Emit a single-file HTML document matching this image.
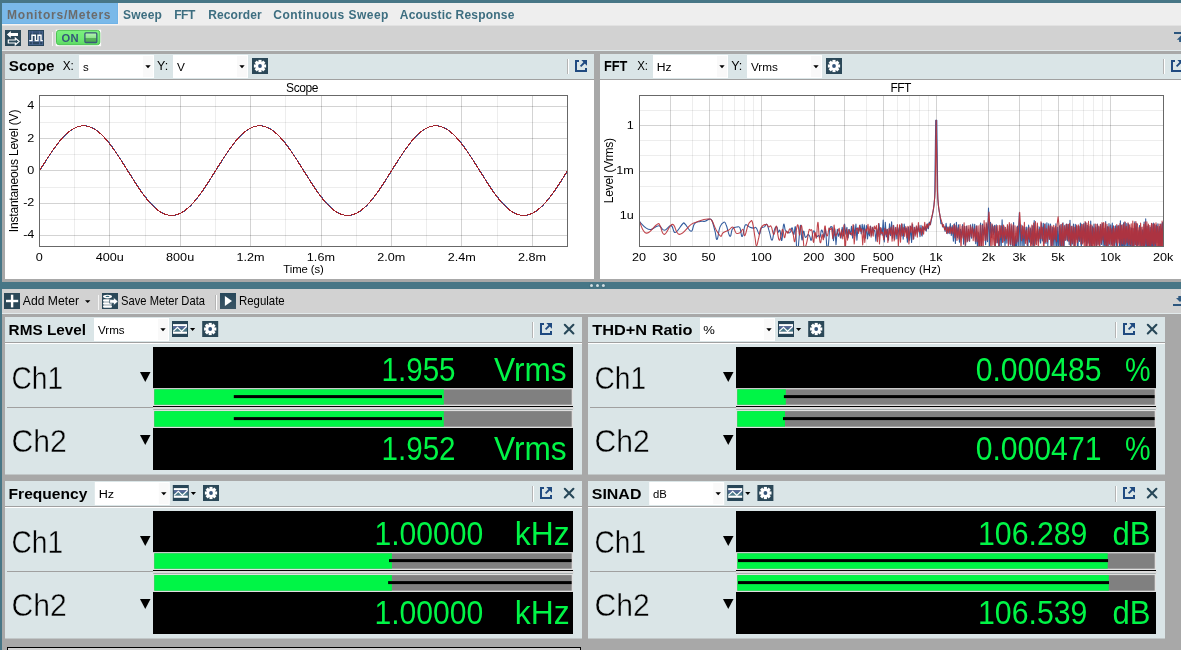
<!DOCTYPE html>
<html lang="en"><head><meta charset="utf-8"><title>APx500 Monitors/Meters</title>
<style>
html,body{margin:0;padding:0}
body{width:1181px;height:650px;overflow:hidden;background:#a8a8a8;position:relative;font-family:"Liberation Sans",sans-serif}
svg{position:absolute;display:block;will-change:transform;font-family:"Liberation Sans",sans-serif;overflow:hidden}
svg line,svg rect{shape-rendering:auto}
.frame-l{position:absolute;left:0;top:0;width:2px;height:650px;background:#477686}
.frame-t{position:absolute;left:0;top:0;width:1181px;height:3px;background:#477686}
.stub{position:absolute;left:7px;top:647px;width:572px;height:10px;border:1px solid #000;background:#d2d2d2}
</style></head>
<body>
<div class="frame-l"></div><div class="frame-t"></div>
<svg class="tabs" style="left:2px;top:3px" width="1179" height="23" viewBox="2 3 1179 23"><rect x="2" y="3" width="1179" height="23" fill="#eeeeee" /><rect x="2" y="3" width="116" height="21" fill="#7ab9e9" /><rect x="117" y="3" width="1" height="21" fill="#70b3e7" /><rect x="2" y="23" width="116" height="1" fill="#70b3e7" /><rect x="118" y="3" width="1" height="22" fill="#f6f3f1" /><rect x="2" y="24" width="117" height="1" fill="#f6f3f1" /><rect x="2" y="25" width="1179" height="1" fill="#e2e2e2" /><text x="7.03" y="18.7" font-size="12" font-weight="bold" letter-spacing="0.775" fill="#6b6b6b" >Monitors/Meters</text><text x="123.08" y="18.7" font-size="12" font-weight="bold" letter-spacing="0.189" fill="#3d6e80" >Sweep</text><text x="174.13" y="18.7" font-size="12" font-weight="bold" letter-spacing="-0.418" fill="#3d6e80" >FFT</text><text x="208.23" y="18.7" font-size="12" font-weight="bold" letter-spacing="0.124" fill="#3d6e80" >Recorder</text><text x="273.26" y="18.7" font-size="12" font-weight="bold" letter-spacing="0.475" fill="#3d6e80" >Continuous Sweep</text><text x="399.80" y="18.7" font-size="12" font-weight="bold" letter-spacing="0.199" fill="#3d6e80" >Acoustic Response</text></svg>
<svg class="toolbar" style="left:2px;top:26px" width="1179" height="25" viewBox="2 26 1179 25"><rect x="2" y="26" width="1179" height="24" fill="#d2d2d2" /><rect x="2" y="50" width="1179" height="1" fill="#e2eaec" /><rect x="5" y="30" width="16" height="16" fill="#2b4858" /><polygon points="6.9,34.5 10.8,30.9 10.8,33.1 18,33.1 18,35.9 10.8,35.9 10.8,38.1" fill="#fff"/><polygon points="19.1,41.5 15.3,38.0 15.3,40.0 8.3,40.0 8.3,43.0 15.3,43.0 15.3,45.0" fill="#2d4b5b" stroke="#fff" stroke-width="1.15" stroke-linejoin="miter"/><rect x="28" y="30" width="16" height="16" fill="#27445a" /><rect x="29" y="31" width="14" height="14" fill="#4a6490" /><rect x="29.8" y="33.2" width="2" height="11" fill="#2a4560" /><rect x="33" y="33.2" width="6" height="11" fill="#2a4560" /><rect x="40.2" y="33.2" width="2" height="11" fill="#2a4560" /><rect x="29.8" y="31.6" width="2" height="0.9" fill="#2a4560" /><rect x="33" y="31.6" width="6" height="0.9" fill="#2a4560" /><rect x="40.2" y="31.6" width="2" height="0.9" fill="#2a4560" /><rect x="29" y="41" width="14" height="0.8" fill="#4a6490" /><polyline points="29.2,40.6 32,40.6 32,35.3 35.3,35.3 35.3,40.6 38,40.6 38,35.3 41,35.3 41,40.6 42.8,40.6" fill="none" stroke="#fff" stroke-width="1.45"/><rect x="52" y="32" width="1" height="14" fill="#f4f4f4" /><defs><linearGradient id="gon" x1="0" y1="0" x2="0" y2="1"><stop offset="0" stop-color="#7cf080"/><stop offset=".6" stop-color="#6de972"/><stop offset="1" stop-color="#5cd962"/></linearGradient><linearGradient id="gsq" x1="0" y1="0" x2="0" y2="1"><stop offset="0" stop-color="#b6f5b4"/><stop offset=".48" stop-color="#8fe58f"/><stop offset=".52" stop-color="#57b55b"/><stop offset="1" stop-color="#4aa84f"/></linearGradient></defs><rect x="55.7" y="29.7" width="45.4" height="16.5" fill="#fbfbfb"/><rect x="56.5" y="30.4" width="43.3" height="14.3" rx="2.4" fill="url(#gon)" stroke="#4dc253" stroke-width="1"/><text x="61.49" y="41.8" font-size="11.2" font-weight="bold" letter-spacing="0.318" fill="#36587a" >ON</text><rect x="84.9" y="32.9" width="11.9" height="9.6" rx="1" fill="url(#gsq)" stroke="#3a5a78" stroke-width="1.3"/><rect x="1174" y="32" width="8" height="2" fill="#2c567e" /><polygon points="1181,35.6 1176.8,39.7 1179.1,39.7 1179.1,42.1 1183,42.1 1183,39.7 1185.2,39.7" fill="#2f5a82"/></svg>
<svg class="panel" style="left:5px;top:54px" width="589" height="225" viewBox="5 54 589 225"><rect x="5" y="54" width="589" height="225" fill="#fff" /><rect x="5" y="54" width="589" height="25" fill="#dae5e7" /><rect x="5" y="79" width="589" height="1" fill="#a0a0a0" /><text transform="translate(8.81 71.4) scale(1.0847 1)" font-size="14" font-weight="bold" fill="#000" >Scope</text><text transform="translate(62.70 70.2) scale(0.9223 1)" font-size="12.8" fill="#000" >X:</text><rect x="79" y="55" width="75" height="23" fill="#fff" /><rect x="143" y="56" width="10" height="21" fill="#f9f9f9" /><polygon points="145.3,65.3 150.70000000000002,65.3 148.0,68.3" fill="#000"/><text transform="translate(82.96 70.6) scale(0.9951 1)" font-size="11.5" fill="#000" >s</text><text transform="translate(157.10 70.2) scale(0.9729 1)" font-size="12.8" fill="#000" >Y:</text><rect x="173" y="55" width="75" height="23" fill="#fff" /><rect x="237" y="56" width="10" height="21" fill="#f9f9f9" /><polygon points="239.3,65.3 244.70000000000002,65.3 242.0,68.3" fill="#000"/><text transform="translate(176.94 70.6) scale(1.0291 1)" font-size="11.5" fill="#000" >V</text><rect x="252" y="58" width="16" height="16" fill="#2b4858" /><rect x="258.45" y="59.9" width="3.1" height="3" fill="#fff" transform="rotate(0 260 66)"/><rect x="258.45" y="59.9" width="3.1" height="3" fill="#fff" transform="rotate(45 260 66)"/><rect x="258.45" y="59.9" width="3.1" height="3" fill="#fff" transform="rotate(90 260 66)"/><rect x="258.45" y="59.9" width="3.1" height="3" fill="#fff" transform="rotate(135 260 66)"/><rect x="258.45" y="59.9" width="3.1" height="3" fill="#fff" transform="rotate(180 260 66)"/><rect x="258.45" y="59.9" width="3.1" height="3" fill="#fff" transform="rotate(225 260 66)"/><rect x="258.45" y="59.9" width="3.1" height="3" fill="#fff" transform="rotate(270 260 66)"/><rect x="258.45" y="59.9" width="3.1" height="3" fill="#fff" transform="rotate(315 260 66)"/><circle cx="260" cy="66" r="4.4" fill="#fff"/><circle cx="260" cy="66" r="1.9" fill="#34547a"/><rect x="567" y="59" width="1" height="15" fill="#b4b4b4"/><rect x="568" y="59" width="1" height="15" fill="#fff"/><path d="M579,61H576V71H586V68" fill="none" stroke="#1f4a80" stroke-width="2"/><polygon points="581.3,60 587,60 587,65.7" fill="#1f4a80"/><line x1="580.6" y1="66.4" x2="585" y2="62" stroke="#1f4a80" stroke-width="1.8"/><line x1="74.5" y1="95.5" x2="74.5" y2="246.5" stroke="#000" stroke-opacity=".07"/><line x1="109.5" y1="95.5" x2="109.5" y2="246.5" stroke="#000" stroke-opacity=".172"/><line x1="145.5" y1="95.5" x2="145.5" y2="246.5" stroke="#000" stroke-opacity=".07"/><line x1="180.5" y1="95.5" x2="180.5" y2="246.5" stroke="#000" stroke-opacity=".172"/><line x1="215.5" y1="95.5" x2="215.5" y2="246.5" stroke="#000" stroke-opacity=".07"/><line x1="250.5" y1="95.5" x2="250.5" y2="246.5" stroke="#000" stroke-opacity=".172"/><line x1="285.5" y1="95.5" x2="285.5" y2="246.5" stroke="#000" stroke-opacity=".07"/><line x1="321.5" y1="95.5" x2="321.5" y2="246.5" stroke="#000" stroke-opacity=".172"/><line x1="356.5" y1="95.5" x2="356.5" y2="246.5" stroke="#000" stroke-opacity=".07"/><line x1="391.5" y1="95.5" x2="391.5" y2="246.5" stroke="#000" stroke-opacity=".172"/><line x1="426.5" y1="95.5" x2="426.5" y2="246.5" stroke="#000" stroke-opacity=".07"/><line x1="461.5" y1="95.5" x2="461.5" y2="246.5" stroke="#000" stroke-opacity=".172"/><line x1="497.5" y1="95.5" x2="497.5" y2="246.5" stroke="#000" stroke-opacity=".07"/><line x1="532.5" y1="95.5" x2="532.5" y2="246.5" stroke="#000" stroke-opacity=".172"/><line x1="39.5" y1="235.5" x2="567.5" y2="235.5" stroke="#000" stroke-opacity=".172"/><line x1="39.5" y1="219.5" x2="567.5" y2="219.5" stroke="#000" stroke-opacity=".07"/><line x1="39.5" y1="203.5" x2="567.5" y2="203.5" stroke="#000" stroke-opacity=".172"/><line x1="39.5" y1="187.5" x2="567.5" y2="187.5" stroke="#000" stroke-opacity=".07"/><line x1="39.5" y1="170.5" x2="567.5" y2="170.5" stroke="#000" stroke-opacity=".172"/><line x1="39.5" y1="154.5" x2="567.5" y2="154.5" stroke="#000" stroke-opacity=".07"/><line x1="39.5" y1="138.5" x2="567.5" y2="138.5" stroke="#000" stroke-opacity=".172"/><line x1="39.5" y1="122.5" x2="567.5" y2="122.5" stroke="#000" stroke-opacity=".07"/><line x1="39.5" y1="106.5" x2="567.5" y2="106.5" stroke="#000" stroke-opacity=".172"/><polyline points="39.50,171.16 40.38,169.76 41.26,168.35 42.14,166.94 43.02,165.54 43.90,164.15 44.78,162.76 45.66,161.38 46.54,160.00 47.42,158.64 48.30,157.29 49.18,155.96 50.06,154.63 50.94,153.33 51.82,152.04 52.70,150.76 53.58,149.51 54.46,148.28 55.34,147.07 56.22,145.89 57.10,144.72 57.98,143.59 58.86,142.48 59.74,141.40 60.62,140.35 61.50,139.32 62.38,138.33 63.26,137.37 64.14,136.44 65.02,135.55 65.90,134.69 66.78,133.87 67.66,133.08 68.54,132.33 69.42,131.62 70.30,130.94 71.18,130.31 72.06,129.71 72.94,129.16 73.82,128.64 74.70,128.17 75.58,127.74 76.46,127.35 77.34,127.01 78.22,126.70 79.10,126.44 79.98,126.23 80.86,126.06 81.74,125.93 82.62,125.84 83.50,125.80 84.38,125.81 85.26,125.86 86.14,125.95 87.02,126.09 87.90,126.27 88.78,126.49 89.66,126.76 90.54,127.07 91.42,127.43 92.30,127.82 93.18,128.26 94.06,128.74 94.94,129.26 95.82,129.83 96.70,130.43 97.58,131.07 98.46,131.76 99.34,132.48 100.22,133.23 101.10,134.03 101.98,134.86 102.86,135.72 103.74,136.63 104.62,137.56 105.50,138.53 106.38,139.52 107.26,140.55 108.14,141.61 109.02,142.70 109.90,143.81 110.78,144.96 111.66,146.12 112.54,147.31 113.42,148.53 114.30,149.76 115.18,151.02 116.06,152.29 116.94,153.59 117.82,154.90 118.70,156.22 119.58,157.56 120.46,158.91 121.34,160.28 122.22,161.65 123.10,163.04 123.98,164.43 124.86,165.82 125.74,167.23 126.62,168.63 127.50,170.04 128.38,171.44 129.26,172.85 130.14,174.26 131.02,175.66 131.90,177.05 132.78,178.44 133.66,179.82 134.54,181.20 135.42,182.56 136.30,183.91 137.18,185.24 138.06,186.57 138.94,187.87 139.82,189.16 140.70,190.44 141.58,191.69 142.46,192.92 143.34,194.13 144.22,195.31 145.10,196.48 145.98,197.61 146.86,198.72 147.74,199.80 148.62,200.85 149.50,201.88 150.38,202.87 151.26,203.83 152.14,204.76 153.02,205.65 153.90,206.51 154.78,207.33 155.66,208.12 156.54,208.87 157.42,209.58 158.30,210.26 159.18,210.89 160.06,211.49 160.94,212.04 161.82,212.56 162.70,213.03 163.58,213.46 164.46,213.85 165.34,214.19 166.22,214.50 167.10,214.76 167.98,214.97 168.86,215.14 169.74,215.27 170.62,215.36 171.50,215.40 172.38,215.39 173.26,215.34 174.14,215.25 175.02,215.11 175.90,214.93 176.78,214.71 177.66,214.44 178.54,214.13 179.42,213.77 180.30,213.38 181.18,212.94 182.06,212.46 182.94,211.94 183.82,211.37 184.70,210.77 185.58,210.13 186.46,209.44 187.34,208.72 188.22,207.97 189.10,207.17 189.98,206.34 190.86,205.48 191.74,204.57 192.62,203.64 193.50,202.67 194.38,201.68 195.26,200.65 196.14,199.59 197.02,198.50 197.90,197.39 198.78,196.24 199.66,195.08 200.54,193.89 201.42,192.67 202.30,191.44 203.18,190.18 204.06,188.91 204.94,187.61 205.82,186.30 206.70,184.98 207.58,183.64 208.46,182.29 209.34,180.92 210.22,179.55 211.10,178.16 211.98,176.77 212.86,175.38 213.74,173.97 214.62,172.57 215.50,171.16 216.38,169.76 217.26,168.35 218.14,166.94 219.02,165.54 219.90,164.15 220.78,162.76 221.66,161.38 222.54,160.00 223.42,158.64 224.30,157.29 225.18,155.96 226.06,154.63 226.94,153.33 227.82,152.04 228.70,150.76 229.58,149.51 230.46,148.28 231.34,147.07 232.22,145.89 233.10,144.72 233.98,143.59 234.86,142.48 235.74,141.40 236.62,140.35 237.50,139.32 238.38,138.33 239.26,137.37 240.14,136.44 241.02,135.55 241.90,134.69 242.78,133.87 243.66,133.08 244.54,132.33 245.42,131.62 246.30,130.94 247.18,130.31 248.06,129.71 248.94,129.16 249.82,128.64 250.70,128.17 251.58,127.74 252.46,127.35 253.34,127.01 254.22,126.70 255.10,126.44 255.98,126.23 256.86,126.06 257.74,125.93 258.62,125.84 259.50,125.80 260.38,125.81 261.26,125.86 262.14,125.95 263.02,126.09 263.90,126.27 264.78,126.49 265.66,126.76 266.54,127.07 267.42,127.43 268.30,127.82 269.18,128.26 270.06,128.74 270.94,129.26 271.82,129.83 272.70,130.43 273.58,131.07 274.46,131.76 275.34,132.48 276.22,133.23 277.10,134.03 277.98,134.86 278.86,135.72 279.74,136.63 280.62,137.56 281.50,138.53 282.38,139.52 283.26,140.55 284.14,141.61 285.02,142.70 285.90,143.81 286.78,144.96 287.66,146.12 288.54,147.31 289.42,148.53 290.30,149.76 291.18,151.02 292.06,152.29 292.94,153.59 293.82,154.90 294.70,156.22 295.58,157.56 296.46,158.91 297.34,160.28 298.22,161.65 299.10,163.04 299.98,164.43 300.86,165.82 301.74,167.23 302.62,168.63 303.50,170.04 304.38,171.44 305.26,172.85 306.14,174.26 307.02,175.66 307.90,177.05 308.78,178.44 309.66,179.82 310.54,181.20 311.42,182.56 312.30,183.91 313.18,185.24 314.06,186.57 314.94,187.87 315.82,189.16 316.70,190.44 317.58,191.69 318.46,192.92 319.34,194.13 320.22,195.31 321.10,196.48 321.98,197.61 322.86,198.72 323.74,199.80 324.62,200.85 325.50,201.88 326.38,202.87 327.26,203.83 328.14,204.76 329.02,205.65 329.90,206.51 330.78,207.33 331.66,208.12 332.54,208.87 333.42,209.58 334.30,210.26 335.18,210.89 336.06,211.49 336.94,212.04 337.82,212.56 338.70,213.03 339.58,213.46 340.46,213.85 341.34,214.19 342.22,214.50 343.10,214.76 343.98,214.97 344.86,215.14 345.74,215.27 346.62,215.36 347.50,215.40 348.38,215.39 349.26,215.34 350.14,215.25 351.02,215.11 351.90,214.93 352.78,214.71 353.66,214.44 354.54,214.13 355.42,213.77 356.30,213.38 357.18,212.94 358.06,212.46 358.94,211.94 359.82,211.37 360.70,210.77 361.58,210.13 362.46,209.44 363.34,208.72 364.22,207.97 365.10,207.17 365.98,206.34 366.86,205.48 367.74,204.57 368.62,203.64 369.50,202.67 370.38,201.68 371.26,200.65 372.14,199.59 373.02,198.50 373.90,197.39 374.78,196.24 375.66,195.08 376.54,193.89 377.42,192.67 378.30,191.44 379.18,190.18 380.06,188.91 380.94,187.61 381.82,186.30 382.70,184.98 383.58,183.64 384.46,182.29 385.34,180.92 386.22,179.55 387.10,178.16 387.98,176.77 388.86,175.38 389.74,173.97 390.62,172.57 391.50,171.16 392.38,169.76 393.26,168.35 394.14,166.94 395.02,165.54 395.90,164.15 396.78,162.76 397.66,161.38 398.54,160.00 399.42,158.64 400.30,157.29 401.18,155.96 402.06,154.63 402.94,153.33 403.82,152.04 404.70,150.76 405.58,149.51 406.46,148.28 407.34,147.07 408.22,145.89 409.10,144.72 409.98,143.59 410.86,142.48 411.74,141.40 412.62,140.35 413.50,139.32 414.38,138.33 415.26,137.37 416.14,136.44 417.02,135.55 417.90,134.69 418.78,133.87 419.66,133.08 420.54,132.33 421.42,131.62 422.30,130.94 423.18,130.31 424.06,129.71 424.94,129.16 425.82,128.64 426.70,128.17 427.58,127.74 428.46,127.35 429.34,127.01 430.22,126.70 431.10,126.44 431.98,126.23 432.86,126.06 433.74,125.93 434.62,125.84 435.50,125.80 436.38,125.81 437.26,125.86 438.14,125.95 439.02,126.09 439.90,126.27 440.78,126.49 441.66,126.76 442.54,127.07 443.42,127.43 444.30,127.82 445.18,128.26 446.06,128.74 446.94,129.26 447.82,129.83 448.70,130.43 449.58,131.07 450.46,131.76 451.34,132.48 452.22,133.23 453.10,134.03 453.98,134.86 454.86,135.72 455.74,136.63 456.62,137.56 457.50,138.53 458.38,139.52 459.26,140.55 460.14,141.61 461.02,142.70 461.90,143.81 462.78,144.96 463.66,146.12 464.54,147.31 465.42,148.53 466.30,149.76 467.18,151.02 468.06,152.29 468.94,153.59 469.82,154.90 470.70,156.22 471.58,157.56 472.46,158.91 473.34,160.28 474.22,161.65 475.10,163.04 475.98,164.43 476.86,165.82 477.74,167.23 478.62,168.63 479.50,170.04 480.38,171.44 481.26,172.85 482.14,174.26 483.02,175.66 483.90,177.05 484.78,178.44 485.66,179.82 486.54,181.20 487.42,182.56 488.30,183.91 489.18,185.24 490.06,186.57 490.94,187.87 491.82,189.16 492.70,190.44 493.58,191.69 494.46,192.92 495.34,194.13 496.22,195.31 497.10,196.48 497.98,197.61 498.86,198.72 499.74,199.80 500.62,200.85 501.50,201.88 502.38,202.87 503.26,203.83 504.14,204.76 505.02,205.65 505.90,206.51 506.78,207.33 507.66,208.12 508.54,208.87 509.42,209.58 510.30,210.26 511.18,210.89 512.06,211.49 512.94,212.04 513.82,212.56 514.70,213.03 515.58,213.46 516.46,213.85 517.34,214.19 518.22,214.50 519.10,214.76 519.98,214.97 520.86,215.14 521.74,215.27 522.62,215.36 523.50,215.40 524.38,215.39 525.26,215.34 526.14,215.25 527.02,215.11 527.90,214.93 528.78,214.71 529.66,214.44 530.54,214.13 531.42,213.77 532.30,213.38 533.18,212.94 534.06,212.46 534.94,211.94 535.82,211.37 536.70,210.77 537.58,210.13 538.46,209.44 539.34,208.72 540.22,207.97 541.10,207.17 541.98,206.34 542.86,205.48 543.74,204.57 544.62,203.64 545.50,202.67 546.38,201.68 547.26,200.65 548.14,199.59 549.02,198.50 549.90,197.39 550.78,196.24 551.66,195.08 552.54,193.89 553.42,192.67 554.30,191.44 555.18,190.18 556.06,188.91 556.94,187.61 557.82,186.30 558.70,184.98 559.58,183.64 560.46,182.29 561.34,180.92 562.22,179.55 563.10,178.16 563.98,176.77 564.86,175.38 565.74,173.97 566.62,172.57 567.50,171.16" fill="none" stroke="#3a5aa0" stroke-width="1" shape-rendering="crispEdges"/><polyline points="39.50,170.60 40.38,169.19 41.26,167.79 42.14,166.38 43.02,164.99 43.90,163.59 44.78,162.21 45.66,160.83 46.54,159.46 47.42,158.10 48.30,156.76 49.18,155.42 50.06,154.11 50.94,152.81 51.82,151.53 52.70,150.26 53.58,149.02 54.46,147.79 55.34,146.59 56.22,145.42 57.10,144.27 57.98,143.14 58.86,142.04 59.74,140.97 60.62,139.93 61.50,138.92 62.38,137.94 63.26,137.00 64.14,136.08 65.02,135.20 65.90,134.36 66.78,133.55 67.66,132.77 68.54,132.04 69.42,131.34 70.30,130.68 71.18,130.06 72.06,129.48 72.94,128.95 73.82,128.45 74.70,127.99 75.58,127.58 76.46,127.21 77.34,126.88 78.22,126.59 79.10,126.35 79.98,126.15 80.86,126.00 81.74,125.89 82.62,125.82 83.50,125.80 84.38,125.82 85.26,125.89 86.14,126.00 87.02,126.15 87.90,126.35 88.78,126.59 89.66,126.88 90.54,127.21 91.42,127.58 92.30,127.99 93.18,128.45 94.06,128.95 94.94,129.48 95.82,130.06 96.70,130.68 97.58,131.34 98.46,132.04 99.34,132.77 100.22,133.55 101.10,134.36 101.98,135.20 102.86,136.08 103.74,137.00 104.62,137.94 105.50,138.92 106.38,139.93 107.26,140.97 108.14,142.04 109.02,143.14 109.90,144.27 110.78,145.42 111.66,146.59 112.54,147.79 113.42,149.02 114.30,150.26 115.18,151.53 116.06,152.81 116.94,154.11 117.82,155.42 118.70,156.76 119.58,158.10 120.46,159.46 121.34,160.83 122.22,162.21 123.10,163.59 123.98,164.99 124.86,166.38 125.74,167.79 126.62,169.19 127.50,170.60 128.38,172.01 129.26,173.41 130.14,174.82 131.02,176.21 131.90,177.61 132.78,178.99 133.66,180.37 134.54,181.74 135.42,183.10 136.30,184.44 137.18,185.78 138.06,187.09 138.94,188.39 139.82,189.67 140.70,190.94 141.58,192.18 142.46,193.41 143.34,194.61 144.22,195.78 145.10,196.93 145.98,198.06 146.86,199.16 147.74,200.23 148.62,201.27 149.50,202.28 150.38,203.26 151.26,204.20 152.14,205.12 153.02,206.00 153.90,206.84 154.78,207.65 155.66,208.43 156.54,209.16 157.42,209.86 158.30,210.52 159.18,211.14 160.06,211.72 160.94,212.25 161.82,212.75 162.70,213.21 163.58,213.62 164.46,213.99 165.34,214.32 166.22,214.61 167.10,214.85 167.98,215.05 168.86,215.20 169.74,215.31 170.62,215.38 171.50,215.40 172.38,215.38 173.26,215.31 174.14,215.20 175.02,215.05 175.90,214.85 176.78,214.61 177.66,214.32 178.54,213.99 179.42,213.62 180.30,213.21 181.18,212.75 182.06,212.25 182.94,211.72 183.82,211.14 184.70,210.52 185.58,209.86 186.46,209.16 187.34,208.43 188.22,207.65 189.10,206.84 189.98,206.00 190.86,205.12 191.74,204.20 192.62,203.26 193.50,202.28 194.38,201.27 195.26,200.23 196.14,199.16 197.02,198.06 197.90,196.93 198.78,195.78 199.66,194.61 200.54,193.41 201.42,192.18 202.30,190.94 203.18,189.67 204.06,188.39 204.94,187.09 205.82,185.78 206.70,184.44 207.58,183.10 208.46,181.74 209.34,180.37 210.22,178.99 211.10,177.61 211.98,176.21 212.86,174.82 213.74,173.41 214.62,172.01 215.50,170.60 216.38,169.19 217.26,167.79 218.14,166.38 219.02,164.99 219.90,163.59 220.78,162.21 221.66,160.83 222.54,159.46 223.42,158.10 224.30,156.76 225.18,155.42 226.06,154.11 226.94,152.81 227.82,151.53 228.70,150.26 229.58,149.02 230.46,147.79 231.34,146.59 232.22,145.42 233.10,144.27 233.98,143.14 234.86,142.04 235.74,140.97 236.62,139.93 237.50,138.92 238.38,137.94 239.26,137.00 240.14,136.08 241.02,135.20 241.90,134.36 242.78,133.55 243.66,132.77 244.54,132.04 245.42,131.34 246.30,130.68 247.18,130.06 248.06,129.48 248.94,128.95 249.82,128.45 250.70,127.99 251.58,127.58 252.46,127.21 253.34,126.88 254.22,126.59 255.10,126.35 255.98,126.15 256.86,126.00 257.74,125.89 258.62,125.82 259.50,125.80 260.38,125.82 261.26,125.89 262.14,126.00 263.02,126.15 263.90,126.35 264.78,126.59 265.66,126.88 266.54,127.21 267.42,127.58 268.30,127.99 269.18,128.45 270.06,128.95 270.94,129.48 271.82,130.06 272.70,130.68 273.58,131.34 274.46,132.04 275.34,132.77 276.22,133.55 277.10,134.36 277.98,135.20 278.86,136.08 279.74,137.00 280.62,137.94 281.50,138.92 282.38,139.93 283.26,140.97 284.14,142.04 285.02,143.14 285.90,144.27 286.78,145.42 287.66,146.59 288.54,147.79 289.42,149.02 290.30,150.26 291.18,151.53 292.06,152.81 292.94,154.11 293.82,155.42 294.70,156.76 295.58,158.10 296.46,159.46 297.34,160.83 298.22,162.21 299.10,163.59 299.98,164.99 300.86,166.38 301.74,167.79 302.62,169.19 303.50,170.60 304.38,172.01 305.26,173.41 306.14,174.82 307.02,176.21 307.90,177.61 308.78,178.99 309.66,180.37 310.54,181.74 311.42,183.10 312.30,184.44 313.18,185.78 314.06,187.09 314.94,188.39 315.82,189.67 316.70,190.94 317.58,192.18 318.46,193.41 319.34,194.61 320.22,195.78 321.10,196.93 321.98,198.06 322.86,199.16 323.74,200.23 324.62,201.27 325.50,202.28 326.38,203.26 327.26,204.20 328.14,205.12 329.02,206.00 329.90,206.84 330.78,207.65 331.66,208.43 332.54,209.16 333.42,209.86 334.30,210.52 335.18,211.14 336.06,211.72 336.94,212.25 337.82,212.75 338.70,213.21 339.58,213.62 340.46,213.99 341.34,214.32 342.22,214.61 343.10,214.85 343.98,215.05 344.86,215.20 345.74,215.31 346.62,215.38 347.50,215.40 348.38,215.38 349.26,215.31 350.14,215.20 351.02,215.05 351.90,214.85 352.78,214.61 353.66,214.32 354.54,213.99 355.42,213.62 356.30,213.21 357.18,212.75 358.06,212.25 358.94,211.72 359.82,211.14 360.70,210.52 361.58,209.86 362.46,209.16 363.34,208.43 364.22,207.65 365.10,206.84 365.98,206.00 366.86,205.12 367.74,204.20 368.62,203.26 369.50,202.28 370.38,201.27 371.26,200.23 372.14,199.16 373.02,198.06 373.90,196.93 374.78,195.78 375.66,194.61 376.54,193.41 377.42,192.18 378.30,190.94 379.18,189.67 380.06,188.39 380.94,187.09 381.82,185.78 382.70,184.44 383.58,183.10 384.46,181.74 385.34,180.37 386.22,178.99 387.10,177.61 387.98,176.21 388.86,174.82 389.74,173.41 390.62,172.01 391.50,170.60 392.38,169.19 393.26,167.79 394.14,166.38 395.02,164.99 395.90,163.59 396.78,162.21 397.66,160.83 398.54,159.46 399.42,158.10 400.30,156.76 401.18,155.42 402.06,154.11 402.94,152.81 403.82,151.53 404.70,150.26 405.58,149.02 406.46,147.79 407.34,146.59 408.22,145.42 409.10,144.27 409.98,143.14 410.86,142.04 411.74,140.97 412.62,139.93 413.50,138.92 414.38,137.94 415.26,137.00 416.14,136.08 417.02,135.20 417.90,134.36 418.78,133.55 419.66,132.77 420.54,132.04 421.42,131.34 422.30,130.68 423.18,130.06 424.06,129.48 424.94,128.95 425.82,128.45 426.70,127.99 427.58,127.58 428.46,127.21 429.34,126.88 430.22,126.59 431.10,126.35 431.98,126.15 432.86,126.00 433.74,125.89 434.62,125.82 435.50,125.80 436.38,125.82 437.26,125.89 438.14,126.00 439.02,126.15 439.90,126.35 440.78,126.59 441.66,126.88 442.54,127.21 443.42,127.58 444.30,127.99 445.18,128.45 446.06,128.95 446.94,129.48 447.82,130.06 448.70,130.68 449.58,131.34 450.46,132.04 451.34,132.77 452.22,133.55 453.10,134.36 453.98,135.20 454.86,136.08 455.74,137.00 456.62,137.94 457.50,138.92 458.38,139.93 459.26,140.97 460.14,142.04 461.02,143.14 461.90,144.27 462.78,145.42 463.66,146.59 464.54,147.79 465.42,149.02 466.30,150.26 467.18,151.53 468.06,152.81 468.94,154.11 469.82,155.42 470.70,156.76 471.58,158.10 472.46,159.46 473.34,160.83 474.22,162.21 475.10,163.59 475.98,164.99 476.86,166.38 477.74,167.79 478.62,169.19 479.50,170.60 480.38,172.01 481.26,173.41 482.14,174.82 483.02,176.21 483.90,177.61 484.78,178.99 485.66,180.37 486.54,181.74 487.42,183.10 488.30,184.44 489.18,185.78 490.06,187.09 490.94,188.39 491.82,189.67 492.70,190.94 493.58,192.18 494.46,193.41 495.34,194.61 496.22,195.78 497.10,196.93 497.98,198.06 498.86,199.16 499.74,200.23 500.62,201.27 501.50,202.28 502.38,203.26 503.26,204.20 504.14,205.12 505.02,206.00 505.90,206.84 506.78,207.65 507.66,208.43 508.54,209.16 509.42,209.86 510.30,210.52 511.18,211.14 512.06,211.72 512.94,212.25 513.82,212.75 514.70,213.21 515.58,213.62 516.46,213.99 517.34,214.32 518.22,214.61 519.10,214.85 519.98,215.05 520.86,215.20 521.74,215.31 522.62,215.38 523.50,215.40 524.38,215.38 525.26,215.31 526.14,215.20 527.02,215.05 527.90,214.85 528.78,214.61 529.66,214.32 530.54,213.99 531.42,213.62 532.30,213.21 533.18,212.75 534.06,212.25 534.94,211.72 535.82,211.14 536.70,210.52 537.58,209.86 538.46,209.16 539.34,208.43 540.22,207.65 541.10,206.84 541.98,206.00 542.86,205.12 543.74,204.20 544.62,203.26 545.50,202.28 546.38,201.27 547.26,200.23 548.14,199.16 549.02,198.06 549.90,196.93 550.78,195.78 551.66,194.61 552.54,193.41 553.42,192.18 554.30,190.94 555.18,189.67 556.06,188.39 556.94,187.09 557.82,185.78 558.70,184.44 559.58,183.10 560.46,181.74 561.34,180.37 562.22,178.99 563.10,177.61 563.98,176.21 564.86,174.82 565.74,173.41 566.62,172.01 567.50,170.60" fill="none" stroke="#a2242e" stroke-width="1" shape-rendering="crispEdges"/><rect x="39.5" y="95.5" width="528.0" height="151.0" fill="none" stroke="#686868"/><text x="286.10" y="91.7" font-size="12" letter-spacing="-0.452" fill="#000" >Scope</text><text transform="translate(34.4 109.4) scale(1.12 1)" font-size="11.3" text-anchor="end" fill="#000">4</text><text transform="translate(34.4 141.6) scale(1.12 1)" font-size="11.3" text-anchor="end" fill="#000">2</text><text transform="translate(34.4 173.8) scale(1.12 1)" font-size="11.3" text-anchor="end" fill="#000">0</text><text transform="translate(34.4 206.00000000000003) scale(1.12 1)" font-size="11.3" text-anchor="end" fill="#000">-2</text><text transform="translate(34.4 238.20000000000002) scale(1.12 1)" font-size="11.3" text-anchor="end" fill="#000">-4</text><text transform="translate(39.3 260.5) scale(1.12 1)" font-size="11.3" text-anchor="middle" fill="#000">0</text><text transform="translate(109.7 260.5) scale(1.12 1)" font-size="11.3" text-anchor="middle" fill="#000">400u</text><text transform="translate(180.10000000000002 260.5) scale(1.12 1)" font-size="11.3" text-anchor="middle" fill="#000">800u</text><text transform="translate(250.5 260.5) scale(1.12 1)" font-size="11.3" text-anchor="middle" fill="#000">1.2m</text><text transform="translate(320.90000000000003 260.5) scale(1.12 1)" font-size="11.3" text-anchor="middle" fill="#000">1.6m</text><text transform="translate(391.3 260.5) scale(1.12 1)" font-size="11.3" text-anchor="middle" fill="#000">2.0m</text><text transform="translate(461.7 260.5) scale(1.12 1)" font-size="11.3" text-anchor="middle" fill="#000">2.4m</text><text transform="translate(532.0999999999999 260.5) scale(1.12 1)" font-size="11.3" text-anchor="middle" fill="#000">2.8m</text><text x="283.31" y="272.6" font-size="11.3" letter-spacing="-0.072" fill="#000" >Time (s)</text><text transform="translate(18.4,170.9) rotate(-90)" font-size="12" text-anchor="middle" textLength="122.6" lengthAdjust="spacing">Instantaneous Level (V)</text></svg>
<svg class="panel" style="left:600px;top:54px" width="581" height="225" viewBox="600 54 581 225"><rect x="600" y="54" width="581" height="225" fill="#fff" /><rect x="600" y="54" width="581" height="25" fill="#dae5e7" /><rect x="600" y="79" width="581" height="1" fill="#a0a0a0" /><text transform="translate(603.99 71.4) scale(0.9140 1)" font-size="14" font-weight="bold" fill="#000" >FFT</text><text transform="translate(637.20 70.2) scale(0.8982 1)" font-size="12.8" fill="#000" >X:</text><rect x="653" y="55" width="75" height="23" fill="#fff" /><rect x="717" y="56" width="10" height="21" fill="#f9f9f9" /><polygon points="719.3,65.3 724.6999999999999,65.3 722.0,68.3" fill="#000"/><text transform="translate(656.81 70.6) scale(1.0571 1)" font-size="11.5" fill="#000" >Hz</text><text transform="translate(731.18 70.2) scale(0.9779 1)" font-size="12.8" fill="#000" >Y:</text><rect x="747" y="55" width="75" height="23" fill="#fff" /><rect x="811" y="56" width="10" height="21" fill="#f9f9f9" /><polygon points="813.3,65.3 818.6999999999999,65.3 816.0,68.3" fill="#000"/><text transform="translate(750.94 70.6) scale(1.0227 1)" font-size="11.5" fill="#000" >Vrms</text><rect x="826" y="58" width="16" height="16" fill="#2b4858" /><rect x="832.45" y="59.9" width="3.1" height="3" fill="#fff" transform="rotate(0 834 66)"/><rect x="832.45" y="59.9" width="3.1" height="3" fill="#fff" transform="rotate(45 834 66)"/><rect x="832.45" y="59.9" width="3.1" height="3" fill="#fff" transform="rotate(90 834 66)"/><rect x="832.45" y="59.9" width="3.1" height="3" fill="#fff" transform="rotate(135 834 66)"/><rect x="832.45" y="59.9" width="3.1" height="3" fill="#fff" transform="rotate(180 834 66)"/><rect x="832.45" y="59.9" width="3.1" height="3" fill="#fff" transform="rotate(225 834 66)"/><rect x="832.45" y="59.9" width="3.1" height="3" fill="#fff" transform="rotate(270 834 66)"/><rect x="832.45" y="59.9" width="3.1" height="3" fill="#fff" transform="rotate(315 834 66)"/><circle cx="834" cy="66" r="4.4" fill="#fff"/><circle cx="834" cy="66" r="1.9" fill="#34547a"/><rect x="1163" y="59" width="1" height="15" fill="#b4b4b4"/><rect x="1164" y="59" width="1" height="15" fill="#fff"/><path d="M1175,61H1172V71H1182V68" fill="none" stroke="#1f4a80" stroke-width="2"/><polygon points="1177.3,60 1183,60 1183,65.7" fill="#1f4a80"/><line x1="1176.6" y1="66.4" x2="1181" y2="62" stroke="#1f4a80" stroke-width="1.8"/><line x1="670.5" y1="95.5" x2="670.5" y2="246.5" stroke="#000" stroke-opacity=".172"/><line x1="692.5" y1="95.5" x2="692.5" y2="246.5" stroke="#000" stroke-opacity=".07"/><line x1="709.5" y1="95.5" x2="709.5" y2="246.5" stroke="#000" stroke-opacity=".172"/><line x1="722.5" y1="95.5" x2="722.5" y2="246.5" stroke="#000" stroke-opacity=".07"/><line x1="734.5" y1="95.5" x2="734.5" y2="246.5" stroke="#000" stroke-opacity=".07"/><line x1="744.5" y1="95.5" x2="744.5" y2="246.5" stroke="#000" stroke-opacity=".07"/><line x1="753.5" y1="95.5" x2="753.5" y2="246.5" stroke="#000" stroke-opacity=".07"/><line x1="761.5" y1="95.5" x2="761.5" y2="246.5" stroke="#000" stroke-opacity=".172"/><line x1="814.5" y1="95.5" x2="814.5" y2="246.5" stroke="#000" stroke-opacity=".172"/><line x1="844.5" y1="95.5" x2="844.5" y2="246.5" stroke="#000" stroke-opacity=".172"/><line x1="866.5" y1="95.5" x2="866.5" y2="246.5" stroke="#000" stroke-opacity=".07"/><line x1="883.5" y1="95.5" x2="883.5" y2="246.5" stroke="#000" stroke-opacity=".172"/><line x1="897.5" y1="95.5" x2="897.5" y2="246.5" stroke="#000" stroke-opacity=".07"/><line x1="909.5" y1="95.5" x2="909.5" y2="246.5" stroke="#000" stroke-opacity=".07"/><line x1="919.5" y1="95.5" x2="919.5" y2="246.5" stroke="#000" stroke-opacity=".07"/><line x1="928.5" y1="95.5" x2="928.5" y2="246.5" stroke="#000" stroke-opacity=".07"/><line x1="936.5" y1="95.5" x2="936.5" y2="246.5" stroke="#000" stroke-opacity=".172"/><line x1="988.5" y1="95.5" x2="988.5" y2="246.5" stroke="#000" stroke-opacity=".172"/><line x1="1019.5" y1="95.5" x2="1019.5" y2="246.5" stroke="#000" stroke-opacity=".172"/><line x1="1041.5" y1="95.5" x2="1041.5" y2="246.5" stroke="#000" stroke-opacity=".07"/><line x1="1058.5" y1="95.5" x2="1058.5" y2="246.5" stroke="#000" stroke-opacity=".172"/><line x1="1072.5" y1="95.5" x2="1072.5" y2="246.5" stroke="#000" stroke-opacity=".07"/><line x1="1083.5" y1="95.5" x2="1083.5" y2="246.5" stroke="#000" stroke-opacity=".07"/><line x1="1093.5" y1="95.5" x2="1093.5" y2="246.5" stroke="#000" stroke-opacity=".07"/><line x1="1102.5" y1="95.5" x2="1102.5" y2="246.5" stroke="#000" stroke-opacity=".07"/><line x1="1110.5" y1="95.5" x2="1110.5" y2="246.5" stroke="#000" stroke-opacity=".172"/><line x1="639.5" y1="231.5" x2="1163.5" y2="231.5" stroke="#000" stroke-opacity=".07"/><line x1="639.5" y1="216.5" x2="1163.5" y2="216.5" stroke="#000" stroke-opacity=".172"/><line x1="639.5" y1="201.5" x2="1163.5" y2="201.5" stroke="#000" stroke-opacity=".07"/><line x1="639.5" y1="186.5" x2="1163.5" y2="186.5" stroke="#000" stroke-opacity=".07"/><line x1="639.5" y1="171.5" x2="1163.5" y2="171.5" stroke="#000" stroke-opacity=".172"/><line x1="639.5" y1="155.5" x2="1163.5" y2="155.5" stroke="#000" stroke-opacity=".07"/><line x1="639.5" y1="140.5" x2="1163.5" y2="140.5" stroke="#000" stroke-opacity=".07"/><line x1="639.5" y1="125.5" x2="1163.5" y2="125.5" stroke="#000" stroke-opacity=".172"/><line x1="639.5" y1="110.5" x2="1163.5" y2="110.5" stroke="#000" stroke-opacity=".07"/><clipPath id="fc"><rect x="639.5" y="95.5" width="524" height="151"/></clipPath><g clip-path="url(#fc)"><path d="M639.4,221.5C640.9,223.0 643.6,226.4 646.2,228.1C648.9,229.9 648.9,229.8 651.2,229.4C653.6,229.0 655.0,226.9 656.9,226.2C658.8,225.6 658.4,225.4 660.0,226.2C661.6,227.1 661.9,230.4 664.4,230.2C666.9,230.1 668.9,225.1 671.2,225.6C673.6,226.1 672.8,232.9 675.2,232.5C677.7,232.1 680.4,225.9 682.5,224.0C684.6,222.1 683.1,222.4 685.0,224.0C686.9,225.6 689.2,231.3 691.2,231.2C693.3,231.2 692.5,225.9 694.4,223.8C696.3,221.6 697.7,222.1 700.0,221.5C702.3,220.9 703.1,221.7 705.0,221.2C706.9,220.8 707.2,219.6 708.8,219.4C710.3,219.2 710.5,217.8 711.9,220.4C713.2,223.0 713.8,227.1 715.0,231.2C716.2,235.4 716.0,240.3 717.1,239.4C718.2,238.4 718.5,230.6 720.0,226.9C721.5,223.1 722.4,222.7 723.8,222.2C725.1,221.8 724.9,221.9 726.2,225.0C727.6,228.1 728.6,235.4 730.0,236.2C731.4,237.1 730.9,230.8 732.5,228.8C734.1,226.7 735.9,227.0 737.5,226.9C739.1,226.7 739.0,226.0 740.0,228.1C741.0,230.2 741.1,237.1 742.2,236.5C743.4,235.9 743.8,228.0 745.0,225.6C746.2,223.2 746.4,225.3 747.5,225.6C748.6,226.0 748.6,226.7 750.0,227.2C751.4,227.8 752.4,228.0 753.8,228.1C755.1,228.2 755.0,226.4 756.2,227.8C757.5,229.1 758.3,234.3 759.4,234.4C760.5,234.5 760.1,229.8 761.2,228.1C762.4,226.5 763.1,227.7 764.4,226.9C765.6,226.1 765.8,223.3 766.9,224.4C768.0,225.5 768.2,228.4 769.4,231.9C770.5,235.4 771.0,240.7 772.1,240.2C773.2,239.8 773.3,232.9 774.4,230.0C775.4,227.1 776.0,226.4 776.9,226.9C777.7,227.3 777.5,231.2 778.2,232.0C778.9,232.9 779.2,228.7 780.0,230.6C780.8,232.4 781.0,241.7 781.8,240.4C782.6,239.1 782.8,226.8 783.6,224.6C784.4,222.4 784.6,228.7 785.3,230.3C786.1,231.8 786.3,231.2 787.1,231.7C787.8,232.3 788.0,232.7 788.8,232.8C789.5,232.9 789.7,233.1 790.5,232.0C791.2,230.9 791.4,227.3 792.2,227.8C792.9,228.4 793.1,234.6 793.9,234.6C794.6,234.5 794.8,223.2 795.5,227.7C796.2,232.2 796.4,252.0 797.2,255.0C797.9,258.0 798.1,247.9 798.8,241.3C799.5,234.8 799.7,225.5 800.4,225.2C801.1,224.9 801.3,238.6 802.0,239.9C802.7,241.2 802.9,231.8 803.6,231.2C804.2,230.5 804.4,235.8 805.1,236.9C805.8,238.1 806.0,236.9 806.7,236.4C807.3,235.9 807.5,234.6 808.2,234.6C808.9,234.6 809.1,235.1 809.7,236.3C810.4,237.6 810.6,240.9 811.2,240.3C811.9,239.7 812.1,235.6 812.7,233.5C813.4,231.4 813.6,230.4 814.2,230.9C814.8,231.3 815.0,234.2 815.7,235.5C816.3,236.8 816.5,236.7 817.1,236.7C817.7,236.6 817.9,235.2 818.6,235.3C819.2,235.4 819.4,238.3 820.0,237.2C820.6,236.1 820.8,231.4 821.4,230.3C822.0,229.3 822.2,230.9 822.8,232.4C823.4,233.8 823.6,237.7 824.2,237.1C824.8,236.4 824.9,227.2 825.5,229.4C826.1,231.6 826.3,243.3 826.9,247.1C827.5,250.8 827.6,250.4 828.2,246.3C828.8,242.3 829.3,232.7 829.6,228.8L830.9,226.5 832.2,227.1 833.5,240.6 834.8,228.8 836.0,244.8 837.3,229.2 838.5,236.3 839.8,232.3 841.0,238.1 842.2,227.4 843.4,236.0 844.6,224.0 845.8,234.1 846.9,227.4 848.1,237.9 849.2,229.2 850.4,234.7 851.5,226.2 852.6,238.2 853.7,225.3 854.8,235.9 855.9,224.0 856.9,240.2 858.0,227.6 859.1,231.1 860.1,225.1 861.2,233.9 862.2,224.4 863.3,232.6 864.3,224.8 865.4,238.2 866.4,225.6 867.5,239.0 868.5,230.9 869.6,235.9 870.6,226.0 871.7,235.6 872.7,227.2 873.8,231.1 874.8,230.3 875.9,241.2 876.9,228.8 878.0,236.4 879.0,223.6 880.1,234.7 881.1,228.0 882.2,235.2 883.2,220.1 884.3,242.0 885.3,222.4 886.4,236.9 887.4,229.2 888.5,240.3 889.5,223.7 890.6,235.7 891.6,221.8 892.7,238.3 893.7,225.6 894.8,239.5 895.8,227.2 896.9,238.9 897.9,227.7 899.0,234.1 900.0,225.1 901.1,236.2 902.1,224.1 903.2,239.3 904.2,224.1 905.3,231.9 906.3,228.0 907.4,242.3 908.4,227.0 909.5,240.3 910.5,226.2 911.6,242.5 912.6,224.4 913.7,238.9 914.7,227.2 915.8,234.1 916.8,226.6 917.9,232.0 918.9,225.5 920.0,236.6 921.0,225.3 922.1,236.2 923.1,226.9 924.2,229.9 925.2,227.0 926.3,231.1 927.3,223.9 928.4,228.8 929.4,222.1 930.5,224.4 931.5,219.2 932.6,214.3 933.6,208.3 934.7,197.4 935.7,120.2 936.8,120.2 937.8,198.8 938.8,209.0 939.9,215.1 940.9,223.6 942.0,222.9 943.0,227.1 944.1,226.5 945.1,231.4 946.1,223.2 947.2,233.7 948.2,227.1 949.2,233.7 950.3,223.5 951.3,235.4 952.3,225.5 953.4,241.3 954.4,223.9 955.4,243.4 956.4,222.4 957.5,237.5 958.5,224.7 959.5,242.2 960.5,229.2 961.5,237.2 962.6,224.6 963.6,244.1 964.6,226.4 965.6,245.5 966.6,226.1 967.6,241.3 968.6,229.2 969.6,241.5 970.6,224.9 971.6,238.1 972.7,224.0 973.7,237.1 974.7,224.2 975.7,243.6 976.7,225.7 977.6,255.0 978.6,232.5 979.6,246.8 980.6,223.0 981.6,246.4 982.6,224.1 983.6,235.1 984.6,227.2 985.6,244.7 986.6,223.7 987.5,241.6 988.5,208.1 989.5,246.0 990.5,222.3 991.5,237.4 992.4,224.7 993.4,234.4 994.4,225.4 995.4,245.7 996.3,224.7 997.3,243.0 998.3,231.5 999.2,255.0 1000.2,225.7 1001.2,247.8 1002.1,219.7 1003.1,242.1 1004.1,226.9 1005.0,246.3 1006.0,229.3 1006.9,243.3 1007.9,225.9 1008.8,244.3 1009.8,224.2 1010.7,245.2 1011.7,225.9 1012.6,247.5 1013.6,222.5 1014.5,255.0 1015.5,236.0 1016.4,251.7 1017.4,226.1 1018.3,246.1 1019.3,212.8 1020.2,245.6 1021.1,225.0 1022.1,246.9 1023.0,226.7 1024.0,249.7 1024.9,227.2 1025.8,240.3 1026.7,227.1 1027.7,255.0 1028.6,225.1 1029.5,242.1 1030.5,228.6 1031.4,244.0 1032.3,225.7 1033.2,250.3 1034.2,220.5 1035.1,244.2 1036.0,233.0 1036.9,241.0 1037.8,226.0 1038.7,242.2 1039.7,227.0 1040.6,243.1 1041.5,223.1 1042.4,241.0 1043.3,223.2 1044.2,243.2 1045.1,223.7 1046.0,243.5 1046.9,222.9 1047.8,245.7 1048.7,223.8 1049.6,239.4 1050.5,224.0 1051.4,250.7 1052.3,227.4 1053.2,245.4 1054.1,227.9 1055.0,246.7 1055.9,223.7 1056.8,254.7 1057.7,227.2 1058.6,247.9 1059.5,225.8 1060.4,248.7 1061.2,224.3 1062.1,253.1 1063.0,222.7 1063.9,255.0 1064.8,225.4 1065.7,240.1 1066.5,224.1 1067.4,240.9 1068.3,224.2 1069.2,244.5 1070.0,220.2 1070.9,251.9 1071.8,226.4 1072.6,243.9 1073.5,224.1 1074.4,249.0 1075.3,224.3 1076.1,239.5 1077.0,226.4 1077.8,255.0 1078.7,225.8 1079.6,241.4 1080.4,223.0 1081.3,250.3 1082.1,224.6 1083.0,242.7 1083.9,223.3 1084.7,241.4 1085.6,222.3 1086.4,250.9 1087.3,225.3 1088.1,243.2 1089.0,226.4 1089.8,255.0 1090.7,221.0 1091.5,249.4 1092.4,226.5 1093.2,243.8 1094.0,224.0 1094.9,245.3 1095.7,227.1 1096.6,248.5 1097.4,224.0 1098.2,244.3 1099.1,226.7 1099.9,245.6 1100.7,224.5 1101.6,244.5 1102.4,223.5 1103.2,246.4 1104.1,228.3 1104.9,253.7 1105.7,221.5 1106.5,251.8 1107.4,226.6 1108.2,245.8 1109.0,223.5 1109.8,245.0 1110.7,224.9 1111.5,244.3 1112.3,223.1 1113.1,248.7 1113.9,226.2 1114.7,246.5 1115.6,225.7 1116.4,246.0 1117.2,225.8 1118.0,239.0 1118.8,225.4 1119.6,249.4 1120.4,220.9 1121.2,255.0 1122.0,224.7 1122.8,253.4 1123.6,222.8 1124.4,255.0 1125.2,222.4 1126.0,246.5 1126.8,223.5 1127.6,254.5 1128.4,223.8 1129.2,248.6 1130.0,227.6 1130.8,255.0 1131.6,228.1 1132.4,246.5 1133.2,228.5 1134.0,254.7 1134.8,221.7 1135.6,244.9 1136.3,223.2 1137.1,255.0 1137.9,230.6 1138.7,244.5 1139.5,225.6 1140.3,248.2 1141.0,227.4 1141.8,248.3 1142.6,229.8 1143.4,251.6 1144.1,222.0 1144.9,255.0 1145.7,218.9 1146.5,252.2 1147.2,226.1 1148.0,255.0 1148.8,225.4 1149.5,252.2 1150.3,227.2 1151.1,254.0 1151.8,223.6 1152.6,254.3 1153.4,223.1 1154.1,255.0 1154.9,225.5 1155.7,248.6 1156.4,224.8 1157.2,242.8 1157.9,223.8 1158.7,246.5 1159.5,226.6 1160.2,252.6 1161.0,223.9 1161.7,245.9 1162.5,222.6 1163.2,248.3" fill="none" stroke="#335c9e" stroke-opacity="1" stroke-width="1.08" stroke-linejoin="round"/><path d="M639.4,221.5C640.9,224.1 642.4,232.5 646.2,233.1C650.1,233.8 653.9,226.0 656.9,224.4C659.9,222.7 658.4,223.4 660.0,225.6C661.6,227.8 661.6,234.7 664.4,234.4C667.1,234.1 669.2,224.4 672.5,224.4C675.8,224.4 675.2,234.4 679.4,234.4C683.5,234.4 687.5,227.0 691.2,224.4C695.0,221.7 693.5,223.3 696.2,222.2C699.0,221.2 701.0,220.3 703.8,219.6C706.5,218.9 707.0,218.9 708.8,219.1C710.5,219.3 710.2,218.2 711.9,220.6C713.5,223.0 714.3,226.6 716.2,230.0C718.2,233.4 719.1,235.6 720.6,236.2C722.1,236.9 721.3,234.1 723.1,232.8C724.9,231.4 726.8,231.2 728.8,230.0C730.7,228.8 730.8,227.7 731.9,227.2C733.0,226.8 732.8,226.8 733.8,228.1C734.7,229.4 734.9,232.1 736.2,233.1C737.6,234.1 738.5,233.6 740.0,232.8C741.5,231.9 742.1,228.7 743.1,229.4C744.2,230.0 743.6,236.6 744.8,235.6C745.9,234.7 746.8,228.1 748.1,225.0C749.4,221.9 749.7,222.1 750.6,221.5C751.6,220.9 751.5,219.0 752.5,222.5C753.5,226.0 754.1,232.3 755.0,237.5C755.9,242.7 755.7,246.0 756.5,246.0C757.3,246.0 757.7,241.6 758.8,237.5C759.8,233.4 759.6,230.4 761.2,227.5C762.9,224.6 764.6,224.5 766.2,224.4C767.9,224.2 767.6,226.4 768.8,226.9C769.9,227.3 770.1,224.8 771.2,226.5C772.4,228.2 772.6,234.4 773.8,234.4C774.9,234.3 775.5,226.9 776.2,226.2C777.0,225.6 776.7,228.6 777.3,231.6C778.0,234.6 778.3,238.9 779.1,240.0C779.9,241.0 780.1,238.7 780.9,236.4C781.7,234.1 781.9,229.1 782.7,229.4C783.5,229.7 783.7,237.2 784.5,237.7C785.2,238.1 785.4,232.3 786.2,231.3C787.0,230.3 787.2,233.7 787.9,233.2C788.7,232.7 788.9,229.6 789.6,229.0C790.4,228.4 790.6,229.3 791.3,230.3C792.1,231.4 792.3,231.3 793.0,233.8C793.8,236.3 794.0,242.4 794.7,241.6C795.4,240.8 795.6,233.7 796.3,230.1C797.1,226.4 797.3,224.0 798.0,225.1C798.7,226.2 798.9,235.1 799.6,235.1C800.3,235.2 800.5,225.5 801.2,225.4C801.9,225.2 802.1,229.0 802.8,234.6C803.5,240.1 803.7,248.1 804.3,250.5C805.0,252.9 805.2,247.9 805.9,245.5C806.6,243.0 806.8,242.7 807.4,239.3C808.1,236.0 808.3,232.2 809.0,230.2C809.6,228.3 809.8,230.2 810.5,230.4C811.1,230.5 811.3,228.3 812.0,230.9C812.6,233.6 812.8,242.0 813.5,242.4C814.1,242.8 814.3,233.6 814.9,232.6C815.6,231.6 815.8,240.2 816.4,237.9C817.0,235.6 817.2,222.3 817.8,222.2C818.5,222.0 818.6,232.7 819.3,237.2C819.9,241.7 820.1,243.1 820.7,242.5C821.3,241.9 821.5,235.2 822.1,234.5C822.7,233.8 822.9,241.2 823.5,239.4C824.1,237.5 824.2,227.3 824.9,226.0C825.5,224.8 825.6,231.9 826.2,233.9C826.8,235.9 827.0,236.5 827.6,235.2C828.2,234.0 828.6,229.6 828.9,228.1L830.2,229.7 831.5,227.9 832.8,238.6 834.1,225.0 835.4,236.1 836.7,234.1 837.9,231.5 839.2,228.3 840.4,237.9 841.6,229.8 842.8,239.0 844.0,224.9 845.2,253.6 846.4,228.8 847.5,240.2 848.7,229.6 849.8,233.9 850.9,232.9 852.0,235.4 853.1,224.6 854.2,243.9 855.3,233.3 856.4,228.5 857.5,228.3 858.5,233.4 859.6,225.3 860.6,231.3 861.7,228.8 862.7,245.0 863.8,229.9 864.8,242.5 865.9,229.0 866.9,231.1 868.0,224.4 869.0,233.6 870.1,226.4 871.1,237.3 872.2,227.2 873.2,236.1 874.3,226.1 875.3,229.2 876.4,225.6 877.4,241.7 878.5,223.5 879.5,243.9 880.6,227.6 881.6,233.5 882.7,232.2 883.7,240.0 884.8,228.3 885.8,235.0 886.9,229.2 887.9,242.5 889.0,228.4 890.0,234.7 891.1,227.0 892.1,241.3 893.2,225.2 894.2,241.0 895.3,227.5 896.3,234.9 897.4,224.5 898.4,246.3 899.5,224.7 900.5,242.2 901.6,223.8 902.6,235.7 903.7,227.6 904.7,236.5 905.8,226.5 906.8,237.9 907.9,226.4 908.9,244.0 910.0,225.8 911.0,232.5 912.1,222.8 913.1,239.4 914.2,227.3 915.2,236.1 916.3,225.9 917.3,237.2 918.4,222.5 919.4,231.9 920.5,228.1 921.5,235.2 922.6,226.0 923.6,234.2 924.7,222.4 925.7,230.4 926.8,224.3 927.8,228.2 928.9,223.1 929.9,225.3 931.0,220.0 932.0,216.0 933.1,210.8 934.1,204.9 935.2,191.5 936.2,120.2 937.3,189.0 938.3,204.8 939.4,212.4 940.4,217.6 941.5,220.9 942.5,226.6 943.5,224.5 944.6,229.9 945.6,226.9 946.7,233.5 947.7,227.1 948.7,232.8 949.8,226.7 950.8,233.5 951.8,227.1 952.9,233.9 953.9,224.5 954.9,237.6 955.9,225.5 957.0,240.4 958.0,227.9 959.0,239.2 960.0,224.5 961.0,248.8 962.1,226.1 963.1,238.3 964.1,222.7 965.1,245.3 966.1,226.2 967.1,242.0 968.1,225.5 969.1,240.7 970.1,225.4 971.1,236.9 972.2,226.7 973.2,240.7 974.2,228.8 975.2,241.3 976.2,226.0 977.1,241.6 978.1,225.9 979.1,252.5 980.1,224.8 981.1,255.0 982.1,225.3 983.1,250.2 984.1,220.6 985.1,240.5 986.1,222.5 987.0,240.3 988.0,224.1 989.0,212.0 990.0,228.4 991.0,251.3 991.9,223.8 992.9,245.2 993.9,226.6 994.9,255.0 995.8,225.8 996.8,242.8 997.8,225.5 998.8,246.6 999.7,225.4 1000.7,237.8 1001.6,225.9 1002.6,242.4 1003.6,225.1 1004.5,240.8 1005.5,227.2 1006.5,239.0 1007.4,224.5 1008.4,246.9 1009.3,222.6 1010.3,244.1 1011.2,223.9 1012.2,244.9 1013.1,224.7 1014.1,255.0 1015.0,225.8 1016.0,243.5 1016.9,227.1 1017.9,241.6 1018.8,225.4 1019.7,212.4 1020.7,228.7 1021.6,240.8 1022.5,225.8 1023.5,238.4 1024.4,222.2 1025.4,243.4 1026.3,230.1 1027.2,244.9 1028.1,227.9 1029.1,239.4 1030.0,227.0 1030.9,255.0 1031.9,225.0 1032.8,245.3 1033.7,223.0 1034.6,251.7 1035.5,221.6 1036.5,244.7 1037.4,223.1 1038.3,250.9 1039.2,229.0 1040.1,238.8 1041.0,221.9 1041.9,238.8 1042.8,227.3 1043.8,255.0 1044.7,224.3 1045.6,242.1 1046.5,228.8 1047.4,241.9 1048.3,225.9 1049.2,239.3 1050.1,225.8 1051.0,247.3 1051.9,226.1 1052.8,245.4 1053.7,225.2 1054.6,239.2 1055.5,226.2 1056.4,241.4 1057.2,223.8 1058.1,216.7 1059.0,224.7 1059.9,245.3 1060.8,224.9 1061.7,248.7 1062.6,223.4 1063.5,248.0 1064.3,226.0 1065.2,240.5 1066.1,224.4 1067.0,239.6 1067.8,224.4 1068.7,241.2 1069.6,223.5 1070.5,249.9 1071.3,226.3 1072.2,243.3 1073.1,226.1 1074.0,248.7 1074.8,227.3 1075.7,245.8 1076.6,225.0 1077.4,242.5 1078.3,224.8 1079.1,240.2 1080.0,226.3 1080.9,243.9 1081.7,224.1 1082.6,244.0 1083.4,224.5 1084.3,247.3 1085.1,221.5 1086.0,255.0 1086.8,223.0 1087.7,245.5 1088.5,221.4 1089.4,249.7 1090.2,224.6 1091.1,251.1 1091.9,225.1 1092.8,255.0 1093.6,227.7 1094.5,247.9 1095.3,224.0 1096.1,248.5 1097.0,224.2 1097.8,245.1 1098.7,226.0 1099.5,255.0 1100.3,224.4 1101.2,243.3 1102.0,222.6 1102.8,239.9 1103.6,222.6 1104.5,244.5 1105.3,222.7 1106.1,248.3 1107.0,224.3 1107.8,250.7 1108.6,226.8 1109.4,243.8 1110.2,225.9 1111.1,247.5 1111.9,228.9 1112.7,247.2 1113.5,225.8 1114.3,246.4 1115.1,228.1 1116.0,242.6 1116.8,224.5 1117.6,247.3 1118.4,226.1 1119.2,242.9 1120.0,223.6 1120.8,245.3 1121.6,225.2 1122.4,243.7 1123.2,224.3 1124.0,244.8 1124.8,221.9 1125.6,243.9 1126.4,226.4 1127.2,242.6 1128.0,222.9 1128.8,244.7 1129.6,224.7 1130.4,244.8 1131.2,223.8 1132.0,246.3 1132.8,221.0 1133.6,255.0 1134.4,223.2 1135.2,244.6 1135.9,221.6 1136.7,250.8 1137.5,223.9 1138.3,245.5 1139.1,227.5 1139.9,250.3 1140.6,223.0 1141.4,246.1 1142.2,227.1 1143.0,255.0 1143.8,224.2 1144.5,246.1 1145.3,221.9 1146.1,244.3 1146.9,221.9 1147.6,247.0 1148.4,224.0 1149.2,252.9 1149.9,225.5 1150.7,251.0 1151.5,223.2 1152.2,243.9 1153.0,224.0 1153.8,255.0 1154.5,223.9 1155.3,244.1 1156.0,222.7 1156.8,251.3 1157.6,226.3 1158.3,255.0 1159.1,224.0 1159.8,254.1 1160.6,224.3 1161.3,255.0 1162.1,221.1 1162.8,255.0 1163.6,223.3" fill="none" stroke="#b92f36" stroke-opacity="0.9" stroke-width="1.08" stroke-linejoin="round"/></g><rect x="639.5" y="95.5" width="524.0" height="151.0" fill="none" stroke="#686868"/><text x="890.41" y="91.7" font-size="12" letter-spacing="-0.541" fill="#000" >FFT</text><text transform="translate(633.8 128.5) scale(1.12 1)" font-size="11.3" text-anchor="end" fill="#000">1</text><text transform="translate(633.8 173.8) scale(1.12 1)" font-size="11.3" text-anchor="end" fill="#000">1m</text><text transform="translate(633.8 219.10000000000002) scale(1.12 1)" font-size="11.3" text-anchor="end" fill="#000">1u</text><text transform="translate(639.1 260.5) scale(1.12 1)" font-size="11.3" text-anchor="middle" fill="#000">20</text><text transform="translate(669.9 260.5) scale(1.12 1)" font-size="11.3" text-anchor="middle" fill="#000">30</text><text transform="translate(708.6 260.5) scale(1.12 1)" font-size="11.3" text-anchor="middle" fill="#000">50</text><text transform="translate(761.2 260.5) scale(1.12 1)" font-size="11.3" text-anchor="middle" fill="#000">100</text><text transform="translate(813.8000000000001 260.5) scale(1.12 1)" font-size="11.3" text-anchor="middle" fill="#000">200</text><text transform="translate(844.5 260.5) scale(1.12 1)" font-size="11.3" text-anchor="middle" fill="#000">300</text><text transform="translate(883.3000000000001 260.5) scale(1.12 1)" font-size="11.3" text-anchor="middle" fill="#000">500</text><text transform="translate(935.9 260.5) scale(1.12 1)" font-size="11.3" text-anchor="middle" fill="#000">1k</text><text transform="translate(988.4 260.5) scale(1.12 1)" font-size="11.3" text-anchor="middle" fill="#000">2k</text><text transform="translate(1019.2 260.5) scale(1.12 1)" font-size="11.3" text-anchor="middle" fill="#000">3k</text><text transform="translate(1057.8999999999999 260.5) scale(1.12 1)" font-size="11.3" text-anchor="middle" fill="#000">5k</text><text transform="translate(1110.5 260.5) scale(1.12 1)" font-size="11.3" text-anchor="middle" fill="#000">10k</text><text transform="translate(1163.1 260.5) scale(1.12 1)" font-size="11.3" text-anchor="middle" fill="#000">20k</text><text x="860.85" y="272.6" font-size="11.3" letter-spacing="0.159" fill="#000" >Frequency (Hz)</text><text transform="translate(613.2,170.6) rotate(-90)" font-size="12" text-anchor="middle" textLength="65.2" lengthAdjust="spacing">Level (Vrms)</text></svg>
<svg class="splitter" style="left:2px;top:282px" width="1179" height="7" viewBox="2 282 1179 7"><rect x="2" y="282" width="1179" height="7" fill="#477686" /><rect x="589.5" y="283.6" width="4" height="4" fill="#3f6c7c" /><circle cx="591.5" cy="285.6" r="1.5" fill="#cfdbe0"/><rect x="595.5" y="283.6" width="4" height="4" fill="#3f6c7c" /><circle cx="597.5" cy="285.6" r="1.5" fill="#cfdbe0"/><rect x="601.4" y="283.6" width="4" height="4" fill="#3f6c7c" /><circle cx="603.4" cy="285.6" r="1.5" fill="#cfdbe0"/></svg>
<svg class="toolbar" style="left:2px;top:289px" width="1179" height="25" viewBox="2 289 1179 25"><rect x="2" y="289" width="1179" height="24" fill="#d2d2d2" /><rect x="2" y="313" width="1179" height="1" fill="#e2eaec" /><rect x="4" y="293" width="16" height="16" fill="#2b4858" /><rect x="6" y="299.8" width="12.2" height="2.4" fill="#fff" /><rect x="10.9" y="294.7" width="2.4" height="12.7" fill="#fff" /><text transform="translate(22.78 304.5) scale(1.0249 1)" font-size="11.9" fill="#000" >Add Meter</text><polygon points="85,300.2 90.4,300.2 87.7,303.1" fill="#000"/><rect x="98" y="295" width="1" height="15" fill="#f4f4f4" /><rect x="102" y="293" width="16" height="16" fill="#2b4858" /><ellipse cx="107.5" cy="296.6" rx="4.5" ry="1.8" fill="#fff"/><ellipse cx="107.5" cy="296.4" rx="2" ry=".6" fill="#3c6c7c"/><rect x="103" y="299.3" width="9" height="2.5" rx="1.2" fill="#fff"/><rect x="103" y="302.3" width="9" height="2.5" rx="1.2" fill="#fff"/><rect x="103" y="305.3" width="9" height="2.5" rx="1.2" fill="#fff"/><polygon points="109.6,299.6 113.6,299.6 113.6,297.4 118.2,301.4 113.6,305.4 113.6,303.2 109.6,303.2" fill="#fff" stroke="#2d4b5b" stroke-width=".7"/><text transform="translate(121.03 304.5) scale(0.9403 1)" font-size="11.9" fill="#000" >Save Meter Data</text><rect x="215" y="295" width="1" height="15" fill="#b4b4b4"/><rect x="216" y="295" width="1" height="15" fill="#fff"/><defs><linearGradient id="greg" x1="0" y1="0" x2="0" y2="1"><stop offset="0" stop-color="#28485b"/><stop offset="1" stop-color="#3b5565"/></linearGradient></defs><rect x="220" y="293" width="16" height="16" fill="url(#greg)"/><polygon points="224.9,295.9 224.9,306.1 232,301" fill="#fff"/><text transform="translate(238.95 304.5) scale(0.9625 1)" font-size="11.9" fill="#000" >Regulate</text><rect x="1173" y="304" width="9" height="2" fill="#2c567e" /><polygon points="1180,302 1176,298.1 1178.3,298.1 1178.3,296 1181.7,296 1181.7,298.1 1184,298.1" fill="#2f5a82"/></svg>
<svg class="meter" style="left:5px;top:317px" width="577" height="158" viewBox="5 317 577 158"><rect x="5" y="317" width="577" height="157.5" fill="#dae5e7" /><rect x="5" y="342" width="577" height="1" fill="#a0a0a0" /><rect x="5" y="343" width="577" height="1" fill="#fff" /><text transform="translate(8.59 334.6) scale(1.0789 1)" font-size="14.2" font-weight="bold" fill="#000" >RMS Level</text><rect x="94" y="318" width="75" height="23" fill="#fff" /><rect x="158" y="319" width="10" height="21" fill="#f9f9f9" /><polygon points="160.3,328.3 165.70000000000002,328.3 163.0,331.3" fill="#000"/><text transform="translate(98.05 333.7) scale(1.0072 1)" font-size="11.5" fill="#000" >Vrms</text><rect x="172" y="321" width="16" height="16" fill="#274557" /><rect x="173" y="324.1" width="14" height="2.2" fill="#fff" /><rect x="173" y="326.3" width="14" height="2.4" fill="#56689a" /><rect x="173" y="328.7" width="14" height="2.8" fill="#4a7a8a" /><rect x="173" y="331.6" width="14" height="2.2" fill="#fff" /><polyline points="173.2,331.4 177.5,327.3 181.6,331.4 186.8,326.2" fill="none" stroke="#fff" stroke-width="1.25"/><polygon points="190,328 195.2,328 192.6,330.9" fill="#000"/><rect x="202.2" y="321" width="16" height="16" fill="#2b4858" /><rect x="208.64999999999998" y="322.9" width="3.1" height="3" fill="#fff" transform="rotate(0 210.2 329)"/><rect x="208.64999999999998" y="322.9" width="3.1" height="3" fill="#fff" transform="rotate(45 210.2 329)"/><rect x="208.64999999999998" y="322.9" width="3.1" height="3" fill="#fff" transform="rotate(90 210.2 329)"/><rect x="208.64999999999998" y="322.9" width="3.1" height="3" fill="#fff" transform="rotate(135 210.2 329)"/><rect x="208.64999999999998" y="322.9" width="3.1" height="3" fill="#fff" transform="rotate(180 210.2 329)"/><rect x="208.64999999999998" y="322.9" width="3.1" height="3" fill="#fff" transform="rotate(225 210.2 329)"/><rect x="208.64999999999998" y="322.9" width="3.1" height="3" fill="#fff" transform="rotate(270 210.2 329)"/><rect x="208.64999999999998" y="322.9" width="3.1" height="3" fill="#fff" transform="rotate(315 210.2 329)"/><circle cx="210.2" cy="329" r="4.4" fill="#fff"/><circle cx="210.2" cy="329" r="1.9" fill="#34547a"/><rect x="532" y="322" width="1" height="16" fill="#b4b4b4"/><rect x="533" y="322" width="1" height="16" fill="#fff"/><path d="M544,324H541V334H551V331" fill="none" stroke="#1f4a80" stroke-width="2"/><polygon points="546.3,323 552,323 552,328.7" fill="#1f4a80"/><line x1="545.6" y1="329.4" x2="550" y2="325" stroke="#1f4a80" stroke-width="1.8"/><path d="M564.8,324.8L573.4,333.4M573.4,324.8L564.8,333.4" stroke="#274758" stroke-width="2.1" stroke-linecap="round" fill="none"/><text transform="translate(11.53 388.9) scale(0.9018 1)" font-size="31.2" fill="#000" stroke="#dae5e7" stroke-width="0.4" paint-order="fill stroke">Ch1</text><text transform="translate(11.42 451.5) scale(0.9656 1)" font-size="31.2" fill="#000" stroke="#dae5e7" stroke-width="0.4" paint-order="fill stroke">Ch2</text><polygon points="140,372 150.5,372 145.25,382" fill="#000"/><polygon points="140,435 150.5,435 145.25,445" fill="#000"/><rect x="7" y="407" width="146" height="1" fill="#a0a0a0" /><rect x="153" y="347" width="420" height="123" fill="#000" /><rect x="153" y="388.1" width="420" height="17.9" fill="#e0e0e0" /><rect x="154.3" y="389.3" width="417.4" height="15.4" fill="#808080" /><rect x="154.3" y="389.3" width="289.5" height="15.4" fill="#00f546" /><rect x="233.8" y="395.1" width="208.2" height="3" fill="#000" /><rect x="153" y="407.0" width="421" height="2" fill="#dcdcdc" /><rect x="153" y="409.0" width="420" height="19" fill="#e0e0e0" /><rect x="153.3" y="409.0" width="419.4" height="1" fill="#a6aeae" /><rect x="154.3" y="411.1" width="417.4" height="15.6" fill="#808080" /><rect x="154.3" y="411.1" width="289.5" height="15.6" fill="#00f546" /><rect x="233.8" y="417.1" width="208.2" height="3" fill="#000" /><text transform="translate(381.47 380.7) scale(0.9145 1)" font-size="32.4" fill="#00f546" >1.955</text><text transform="translate(381.47 460.4) scale(0.9145 1)" font-size="32.4" fill="#00f546" >1.952</text><text transform="translate(494.01 380.7) scale(0.9773 1)" font-size="32.4" fill="#00f546" >Vrms</text><text transform="translate(494.01 460.4) scale(0.9773 1)" font-size="32.4" fill="#00f546" >Vrms</text></svg>
<svg class="meter" style="left:588px;top:317px" width="577" height="158" viewBox="588 317 577 158"><rect x="588" y="317" width="577" height="157.5" fill="#dae5e7" /><rect x="588" y="342" width="577" height="1" fill="#a0a0a0" /><rect x="588" y="343" width="577" height="1" fill="#fff" /><text transform="translate(592.25 334.6) scale(1.1511 1)" font-size="14.2" font-weight="bold" fill="#000" >THD+N Ratio</text><rect x="700" y="318" width="75" height="23" fill="#fff" /><rect x="764" y="319" width="10" height="21" fill="#f9f9f9" /><polygon points="766.3,328.3 771.6999999999999,328.3 769.0,331.3" fill="#000"/><text transform="translate(703.16 333.7) scale(1.1364 1)" font-size="11.5" fill="#000" >%</text><rect x="778" y="321" width="16" height="16" fill="#274557" /><rect x="779" y="324.1" width="14" height="2.2" fill="#fff" /><rect x="779" y="326.3" width="14" height="2.4" fill="#56689a" /><rect x="779" y="328.7" width="14" height="2.8" fill="#4a7a8a" /><rect x="779" y="331.6" width="14" height="2.2" fill="#fff" /><polyline points="779.2,331.4 783.5,327.3 787.6,331.4 792.8,326.2" fill="none" stroke="#fff" stroke-width="1.25"/><polygon points="796,328 801.2,328 798.6,330.9" fill="#000"/><rect x="808.2" y="321" width="16" height="16" fill="#2b4858" /><rect x="814.6500000000001" y="322.9" width="3.1" height="3" fill="#fff" transform="rotate(0 816.2 329)"/><rect x="814.6500000000001" y="322.9" width="3.1" height="3" fill="#fff" transform="rotate(45 816.2 329)"/><rect x="814.6500000000001" y="322.9" width="3.1" height="3" fill="#fff" transform="rotate(90 816.2 329)"/><rect x="814.6500000000001" y="322.9" width="3.1" height="3" fill="#fff" transform="rotate(135 816.2 329)"/><rect x="814.6500000000001" y="322.9" width="3.1" height="3" fill="#fff" transform="rotate(180 816.2 329)"/><rect x="814.6500000000001" y="322.9" width="3.1" height="3" fill="#fff" transform="rotate(225 816.2 329)"/><rect x="814.6500000000001" y="322.9" width="3.1" height="3" fill="#fff" transform="rotate(270 816.2 329)"/><rect x="814.6500000000001" y="322.9" width="3.1" height="3" fill="#fff" transform="rotate(315 816.2 329)"/><circle cx="816.2" cy="329" r="4.4" fill="#fff"/><circle cx="816.2" cy="329" r="1.9" fill="#34547a"/><rect x="1115" y="322" width="1" height="16" fill="#b4b4b4"/><rect x="1116" y="322" width="1" height="16" fill="#fff"/><path d="M1127,324H1124V334H1134V331" fill="none" stroke="#1f4a80" stroke-width="2"/><polygon points="1129.3,323 1135,323 1135,328.7" fill="#1f4a80"/><line x1="1128.6" y1="329.4" x2="1133" y2="325" stroke="#1f4a80" stroke-width="1.8"/><path d="M1147.8,324.8L1156.4,333.4M1156.4,324.8L1147.8,333.4" stroke="#274758" stroke-width="2.1" stroke-linecap="round" fill="none"/><text transform="translate(594.53 388.9) scale(0.9018 1)" font-size="31.2" fill="#000" stroke="#dae5e7" stroke-width="0.4" paint-order="fill stroke">Ch1</text><text transform="translate(594.42 451.5) scale(0.9656 1)" font-size="31.2" fill="#000" stroke="#dae5e7" stroke-width="0.4" paint-order="fill stroke">Ch2</text><polygon points="723,372 733.5,372 728.25,382" fill="#000"/><polygon points="723,435 733.5,435 728.25,445" fill="#000"/><rect x="590" y="407" width="146" height="1" fill="#a0a0a0" /><rect x="736" y="347" width="420" height="123" fill="#000" /><rect x="736" y="388.1" width="420" height="17.9" fill="#e0e0e0" /><rect x="737.3" y="389.3" width="417.4" height="15.4" fill="#808080" /><rect x="737.3" y="389.3" width="48.49999999999996" height="15.4" fill="#00f546" /><rect x="783.9" y="395.1" width="370.69999999999993" height="3" fill="#000" /><rect x="736" y="407.0" width="421" height="2" fill="#dcdcdc" /><rect x="736" y="409.0" width="420" height="19" fill="#e0e0e0" /><rect x="736.3" y="409.0" width="419.4" height="1" fill="#a6aeae" /><rect x="737.3" y="411.1" width="417.4" height="15.6" fill="#808080" /><rect x="737.3" y="411.1" width="47.7" height="15.6" fill="#00f546" /><rect x="783.0" y="417.1" width="371.5999999999999" height="3" fill="#000" /><text transform="translate(975.63 380.7) scale(0.9310 1)" font-size="32.4" fill="#00f546" >0.000485</text><text transform="translate(975.63 460.4) scale(0.9310 1)" font-size="32.4" fill="#00f546" >0.000471</text><text transform="translate(1125.09 380.7) scale(0.8881 1)" font-size="32.4" fill="#00f546" >%</text><text transform="translate(1125.09 460.4) scale(0.8881 1)" font-size="32.4" fill="#00f546" >%</text></svg>
<svg class="meter" style="left:5px;top:481px" width="577" height="158" viewBox="5 481 577 158"><rect x="5" y="481" width="577" height="157.5" fill="#dae5e7" /><rect x="5" y="506" width="577" height="1" fill="#a0a0a0" /><rect x="5" y="507" width="577" height="1" fill="#fff" /><text transform="translate(8.59 498.6) scale(1.0972 1)" font-size="14.2" font-weight="bold" fill="#000" >Frequency</text><rect x="94.8" y="482" width="75" height="23" fill="#fff" /><rect x="158.8" y="483" width="10" height="21" fill="#f9f9f9" /><polygon points="161.10000000000002,492.3 166.50000000000003,492.3 163.8,495.3" fill="#000"/><text transform="translate(98.69 497.7) scale(1.0985 1)" font-size="11.5" fill="#000" >Hz</text><rect x="172.8" y="485" width="16" height="16" fill="#274557" /><rect x="173.8" y="488.1" width="14" height="2.2" fill="#fff" /><rect x="173.8" y="490.3" width="14" height="2.4" fill="#56689a" /><rect x="173.8" y="492.7" width="14" height="2.8" fill="#4a7a8a" /><rect x="173.8" y="495.6" width="14" height="2.2" fill="#fff" /><polyline points="174.0,495.4 178.3,491.3 182.4,495.4 187.60000000000002,490.2" fill="none" stroke="#fff" stroke-width="1.25"/><polygon points="190.8,492 196.0,492 193.4,494.9" fill="#000"/><rect x="203.0" y="485" width="16" height="16" fill="#2b4858" /><rect x="209.45" y="486.9" width="3.1" height="3" fill="#fff" transform="rotate(0 211.0 493)"/><rect x="209.45" y="486.9" width="3.1" height="3" fill="#fff" transform="rotate(45 211.0 493)"/><rect x="209.45" y="486.9" width="3.1" height="3" fill="#fff" transform="rotate(90 211.0 493)"/><rect x="209.45" y="486.9" width="3.1" height="3" fill="#fff" transform="rotate(135 211.0 493)"/><rect x="209.45" y="486.9" width="3.1" height="3" fill="#fff" transform="rotate(180 211.0 493)"/><rect x="209.45" y="486.9" width="3.1" height="3" fill="#fff" transform="rotate(225 211.0 493)"/><rect x="209.45" y="486.9" width="3.1" height="3" fill="#fff" transform="rotate(270 211.0 493)"/><rect x="209.45" y="486.9" width="3.1" height="3" fill="#fff" transform="rotate(315 211.0 493)"/><circle cx="211.0" cy="493" r="4.4" fill="#fff"/><circle cx="211.0" cy="493" r="1.9" fill="#34547a"/><rect x="532" y="486" width="1" height="16" fill="#b4b4b4"/><rect x="533" y="486" width="1" height="16" fill="#fff"/><path d="M544,488H541V498H551V495" fill="none" stroke="#1f4a80" stroke-width="2"/><polygon points="546.3,487 552,487 552,492.7" fill="#1f4a80"/><line x1="545.6" y1="493.4" x2="550" y2="489" stroke="#1f4a80" stroke-width="1.8"/><path d="M564.8,488.8L573.4,497.4M573.4,488.8L564.8,497.4" stroke="#274758" stroke-width="2.1" stroke-linecap="round" fill="none"/><text transform="translate(11.53 552.9) scale(0.9018 1)" font-size="31.2" fill="#000" stroke="#dae5e7" stroke-width="0.4" paint-order="fill stroke">Ch1</text><text transform="translate(11.42 615.5) scale(0.9656 1)" font-size="31.2" fill="#000" stroke="#dae5e7" stroke-width="0.4" paint-order="fill stroke">Ch2</text><polygon points="140,536 150.5,536 145.25,546" fill="#000"/><polygon points="140,599 150.5,599 145.25,609" fill="#000"/><rect x="7" y="571" width="146" height="1" fill="#a0a0a0" /><rect x="153" y="511" width="420" height="123" fill="#000" /><rect x="153" y="552.1" width="420" height="17.9" fill="#e0e0e0" /><rect x="154.3" y="553.3000000000001" width="417.4" height="15.4" fill="#808080" /><rect x="154.3" y="553.3000000000001" width="237.59999999999997" height="15.4" fill="#00f546" /><rect x="389" y="559.1" width="182.60000000000002" height="3" fill="#000" /><rect x="153" y="571.0" width="421" height="2" fill="#dcdcdc" /><rect x="153" y="573.0" width="420" height="19" fill="#e0e0e0" /><rect x="153.3" y="573.0" width="419.4" height="1" fill="#a6aeae" /><rect x="154.3" y="575.1" width="417.4" height="15.6" fill="#808080" /><rect x="154.3" y="575.1" width="237.59999999999997" height="15.6" fill="#00f546" /><rect x="388.1" y="581.1" width="183.5" height="3" fill="#000" /><text transform="translate(374.44 544.7) scale(0.9295 1)" font-size="32.4" fill="#00f546" >1.00000</text><text transform="translate(374.44 624.4) scale(0.9295 1)" font-size="32.4" fill="#00f546" >1.00000</text><text transform="translate(514.76 544.7) scale(0.9835 1)" font-size="32.4" fill="#00f546" >kHz</text><text transform="translate(514.76 624.4) scale(0.9835 1)" font-size="32.4" fill="#00f546" >kHz</text></svg>
<svg class="meter" style="left:588px;top:481px" width="577" height="158" viewBox="588 481 577 158"><rect x="588" y="481" width="577" height="157.5" fill="#dae5e7" /><rect x="588" y="506" width="577" height="1" fill="#a0a0a0" /><rect x="588" y="507" width="577" height="1" fill="#fff" /><text transform="translate(591.78 498.6) scale(1.1244 1)" font-size="14.2" font-weight="bold" fill="#000" >SINAD</text><rect x="649.2" y="482" width="75" height="23" fill="#fff" /><rect x="713.2" y="483" width="10" height="21" fill="#f9f9f9" /><polygon points="715.5,492.3 720.9,492.3 718.2,495.3" fill="#000"/><text transform="translate(652.92 497.7) scale(0.9847 1)" font-size="11.5" fill="#000" >dB</text><rect x="727.2" y="485" width="16" height="16" fill="#274557" /><rect x="728.2" y="488.1" width="14" height="2.2" fill="#fff" /><rect x="728.2" y="490.3" width="14" height="2.4" fill="#56689a" /><rect x="728.2" y="492.7" width="14" height="2.8" fill="#4a7a8a" /><rect x="728.2" y="495.6" width="14" height="2.2" fill="#fff" /><polyline points="728.4000000000001,495.4 732.7,491.3 736.8000000000001,495.4 742.0,490.2" fill="none" stroke="#fff" stroke-width="1.25"/><polygon points="745.2,492 750.4000000000001,492 747.8000000000001,494.9" fill="#000"/><rect x="757.4000000000001" y="485" width="16" height="16" fill="#2b4858" /><rect x="763.8500000000001" y="486.9" width="3.1" height="3" fill="#fff" transform="rotate(0 765.4000000000001 493)"/><rect x="763.8500000000001" y="486.9" width="3.1" height="3" fill="#fff" transform="rotate(45 765.4000000000001 493)"/><rect x="763.8500000000001" y="486.9" width="3.1" height="3" fill="#fff" transform="rotate(90 765.4000000000001 493)"/><rect x="763.8500000000001" y="486.9" width="3.1" height="3" fill="#fff" transform="rotate(135 765.4000000000001 493)"/><rect x="763.8500000000001" y="486.9" width="3.1" height="3" fill="#fff" transform="rotate(180 765.4000000000001 493)"/><rect x="763.8500000000001" y="486.9" width="3.1" height="3" fill="#fff" transform="rotate(225 765.4000000000001 493)"/><rect x="763.8500000000001" y="486.9" width="3.1" height="3" fill="#fff" transform="rotate(270 765.4000000000001 493)"/><rect x="763.8500000000001" y="486.9" width="3.1" height="3" fill="#fff" transform="rotate(315 765.4000000000001 493)"/><circle cx="765.4000000000001" cy="493" r="4.4" fill="#fff"/><circle cx="765.4000000000001" cy="493" r="1.9" fill="#34547a"/><rect x="1115" y="486" width="1" height="16" fill="#b4b4b4"/><rect x="1116" y="486" width="1" height="16" fill="#fff"/><path d="M1127,488H1124V498H1134V495" fill="none" stroke="#1f4a80" stroke-width="2"/><polygon points="1129.3,487 1135,487 1135,492.7" fill="#1f4a80"/><line x1="1128.6" y1="493.4" x2="1133" y2="489" stroke="#1f4a80" stroke-width="1.8"/><path d="M1147.8,488.8L1156.4,497.4M1156.4,488.8L1147.8,497.4" stroke="#274758" stroke-width="2.1" stroke-linecap="round" fill="none"/><text transform="translate(594.53 552.9) scale(0.9018 1)" font-size="31.2" fill="#000" stroke="#dae5e7" stroke-width="0.4" paint-order="fill stroke">Ch1</text><text transform="translate(594.42 615.5) scale(0.9656 1)" font-size="31.2" fill="#000" stroke="#dae5e7" stroke-width="0.4" paint-order="fill stroke">Ch2</text><polygon points="723,536 733.5,536 728.25,546" fill="#000"/><polygon points="723,599 733.5,599 728.25,609" fill="#000"/><rect x="590" y="571" width="146" height="1" fill="#a0a0a0" /><rect x="736" y="511" width="420" height="123" fill="#000" /><rect x="736" y="552.1" width="420" height="17.9" fill="#e0e0e0" /><rect x="737.3" y="553.3000000000001" width="417.4" height="15.4" fill="#808080" /><rect x="737.3" y="553.3000000000001" width="370.40000000000003" height="15.4" fill="#00f546" /><rect x="738" y="559.1" width="370.0999999999999" height="3" fill="#000" /><rect x="736" y="571.0" width="421" height="2" fill="#dcdcdc" /><rect x="736" y="573.0" width="420" height="19" fill="#e0e0e0" /><rect x="736.3" y="573.0" width="419.4" height="1" fill="#a6aeae" /><rect x="737.3" y="575.1" width="417.4" height="15.6" fill="#808080" /><rect x="737.3" y="575.1" width="371.49999999999994" height="15.6" fill="#00f546" /><rect x="738" y="581.1" width="371" height="3" fill="#000" /><text transform="translate(977.94 544.7) scale(0.9358 1)" font-size="32.4" fill="#00f546" >106.289</text><text transform="translate(977.94 624.4) scale(0.9358 1)" font-size="32.4" fill="#00f546" >106.539</text><text transform="translate(1112.42 544.7) scale(0.9577 1)" font-size="32.4" fill="#00f546" >dB</text><text transform="translate(1112.42 624.4) scale(0.9577 1)" font-size="32.4" fill="#00f546" >dB</text></svg>
<div class="stub"></div>
</body></html>
